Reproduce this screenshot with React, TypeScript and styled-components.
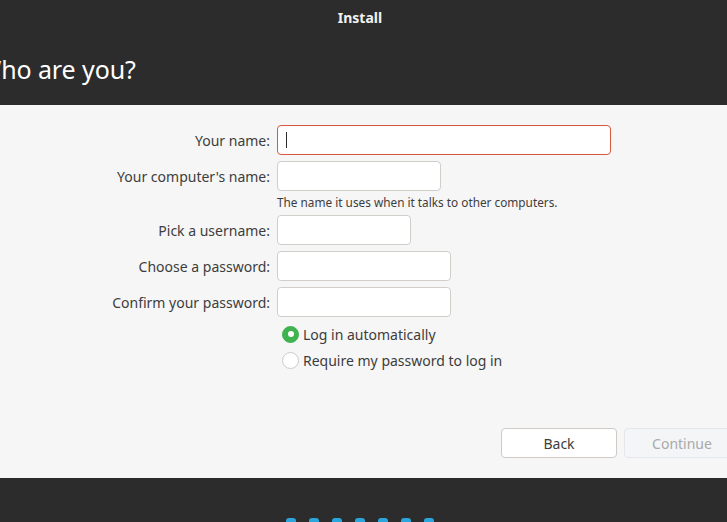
import styled, { createGlobalStyle } from "styled-components";

const GlobalStyle = createGlobalStyle`
  html, body {
    margin: 0;
    padding: 0;
    overflow: hidden;
    background: #2c2c2c;
  }
  * { box-sizing: border-box; }
`;

const Window = styled.div`
  width: 727px;
  height: 522px;
  display: flex;
  flex-direction: column;
  overflow: hidden;
  font-family: "Noto Sans", "DejaVu Sans", sans-serif;
  color: #3d3d3d;
`;

const Header = styled.header`
  height: 105px;
  background: #2c2c2c;
  color: #ffffff;
  display: flex;
  flex-direction: column;
`;

const WindowTitle = styled.div`
  height: 35px;
  display: flex;
  align-items: center;
  justify-content: center;
  padding-right: 7px;
  font-size: 14px;
  font-weight: 700;
  color: #f2f2f2;
`;

const PageTitle = styled.h1`
  margin: 0 0 0 -22px;
  padding-top: 17px;
  font-size: 25px;
  font-weight: 400;
  line-height: 34px;
  letter-spacing: -0.1px;
  color: #ffffff;
  white-space: nowrap;
`;

const Content = styled.main`
  flex: 1;
  background: #f6f6f6;
  display: flex;
  flex-direction: column;
  padding: 20px 0 20px 0;
`;

const Form = styled.div`
  display: grid;
  grid-template-columns: 270px auto;
  column-gap: 7px;
  row-gap: 6px;
  align-items: center;
  justify-items: start;
`;

const Label = styled.label`
  justify-self: end;
  font-size: 14px;
  color: #3d3d3d;
  white-space: nowrap;
`;

const Input = styled.div<{ $w: number; $error?: boolean }>`
  width: ${({ $w }) => $w}px;
  height: 30px;
  background: #ffffff;
  border: 1px solid ${({ $error }) => ($error ? "#d9573c" : "#d1cdc9")};
  border-radius: 4px;
  display: flex;
  align-items: center;
  padding-left: 8px;
`;

const Caret = styled.span`
  width: 1px;
  height: 16px;
  background: #2c2c2c;
`;

const Hint = styled.div`
  grid-column: 2;
  margin-top: -2px;
  font-size: 11.8px;
  line-height: 14px;
  color: #3d3d3d;
  white-space: nowrap;
`;

const RadioList = styled.div`
  grid-column: 2;
  display: flex;
  flex-direction: column;
  gap: 6px;
  margin-top: 1px;
  padding-left: 5px;
`;

const RadioRow = styled.div`
  display: flex;
  align-items: center;
  gap: 4px;
  height: 20px;
  font-size: 14px;
  color: #3d3d3d;
`;

const RadioDot = styled.span<{ $on?: boolean }>`
  width: 17px;
  height: 17px;
  border-radius: 50%;
  background: ${({ $on }) => ($on ? "#3eb34f" : "#ffffff")};
  border: 1px solid ${({ $on }) => ($on ? "#3eb34f" : "#cfcac6")};
  display: flex;
  align-items: center;
  justify-content: center;
  &::after {
    content: "";
    display: ${({ $on }) => ($on ? "block" : "none")};
    width: 6px;
    height: 6px;
    border-radius: 50%;
    background: #ffffff;
  }
`;

const Actions = styled.div`
  margin-top: auto;
  margin-right: -13px;
  display: flex;
  justify-content: flex-end;
  gap: 7px;
`;

const Button = styled.button<{ $disabled?: boolean }>`
  width: 116px;
  height: 30px;
  border-radius: 4px;
  font-family: inherit;
  font-size: 14px;
  border: 1px solid ${({ $disabled }) => ($disabled ? "#e3e6ea" : "#cfcac6")};
  background: ${({ $disabled }) => ($disabled ? "#f3f5f7" : "#ffffff")};
  color: ${({ $disabled }) => ($disabled ? "#a9a9a9" : "#3d3d3d")};
`;

const Footer = styled.footer`
  height: 44px;
  background: #2c2c2c;
  display: flex;
  justify-content: center;
  gap: 13px;
  padding: 40px 7px 0 0;
`;

const Dot = styled.span`
  width: 10px;
  height: 10px;
  border-radius: 3px;
  background: #2aa6dc;
`;

export default function App() {
  return (
    <Window>
      <GlobalStyle />
      <Header>
        <WindowTitle>Install</WindowTitle>
        <PageTitle>Who are you?</PageTitle>
      </Header>
      <Content>
        <Form>
          <Label>Your name:</Label>
          <Input $w={334} $error>
            <Caret />
          </Input>

          <Label>Your computer's name:</Label>
          <Input $w={164} />
          <Hint>The name it uses when it talks to other computers.</Hint>

          <Label>Pick a username:</Label>
          <Input $w={134} />

          <Label>Choose a password:</Label>
          <Input $w={174} />

          <Label>Confirm your password:</Label>
          <Input $w={174} />

          <RadioList>
            <RadioRow>
              <RadioDot $on />
              Log in automatically
            </RadioRow>
            <RadioRow>
              <RadioDot />
              Require my password to log in
            </RadioRow>
          </RadioList>
        </Form>
        <Actions>
          <Button>Back</Button>
          <Button $disabled>Continue</Button>
        </Actions>
      </Content>
      <Footer>
        {Array.from({ length: 7 }).map((_, i) => (
          <Dot key={i} />
        ))}
      </Footer>
    </Window>
  );
}
